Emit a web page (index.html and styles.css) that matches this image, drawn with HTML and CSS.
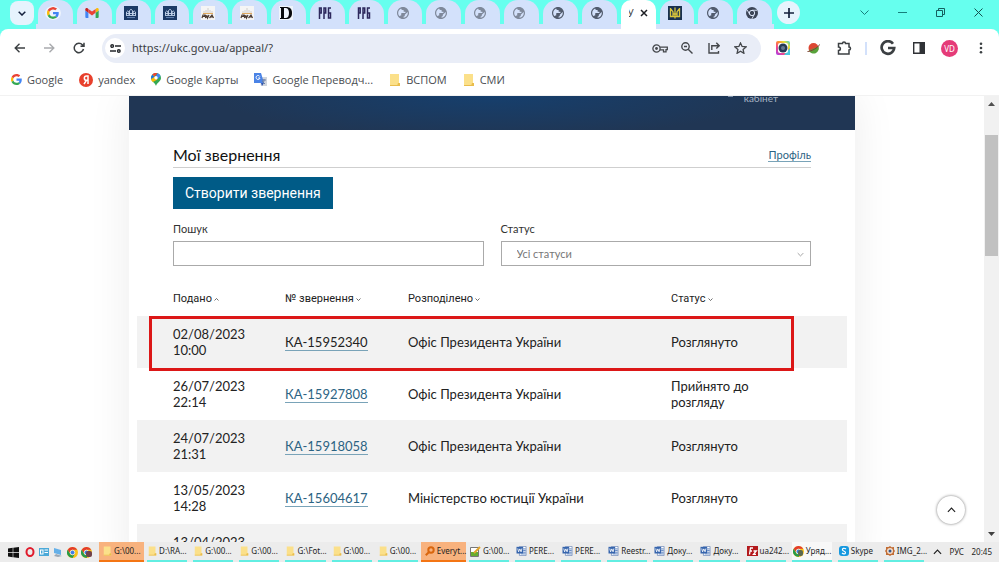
FILE: index.html
```html
<!DOCTYPE html>
<html lang="uk">
<head>
<meta charset="utf-8">
<title>Мої звернення</title>
<link rel="stylesheet" href="styles.css">
</head>
<body>
<svg class="defs" aria-hidden="true">
  <symbol id="google" viewBox="0 0 48 48"><path fill="#EA4335" d="M24 9.500c3.540 0 6.710 1.220 9.210 3.600l6.850-6.850C35.900 2.380 30.470 0 24 0 14.620 0 6.510 5.380 2.560 13.220l7.980 6.190C12.430 13.720 17.740 9.500 24 9.500z"/><path fill="#4285F4" d="M46.980 24.550c0-1.570-.15-3.090-.38-4.550H24v9.020h12.940c-.58 2.960-2.260 5.480-4.780 7.180l7.730 6c4.510-4.180 7.090-10.360 7.090-17.650z"/><path fill="#FBBC05" d="M10.530 28.590c-.48-1.450-.76-2.990-.76-4.590s.27-3.140.76-4.590l-7.980-6.190C.92 16.460 0 20.120 0 24c0 3.880.92 7.540 2.560 10.780l7.970-6.190z"/><path fill="#34A853" d="M24 48c6.480 0 11.930-2.130 15.890-5.810l-7.730-6c-2.150 1.450-4.920 2.300-8.160 2.300-6.260 0-11.570-4.220-13.470-9.910l-7.980 6.190C6.510 42.620 14.620 48 24 48z"/></symbol>
  <symbol id="gmail" viewBox="0 0 24 18"><path fill="#4285F4" d="M1.600 18H5.500V8.700L0 4.600v11.800C0 17.300.7 18 1.600 18z"/><path fill="#34A853" d="M18.500 18h3.900c.9 0 1.600-.7 1.600-1.600V4.600l-5.500 4.100z"/><path fill="#FBBC04" d="M18.500 1.700v7L24 4.600V2.400c0-2-2.300-3.200-3.900-2z"/><path fill="#EA4335" d="M5.500 8.700v-7L12 6.500l6.500-4.800v7L12 13.500z"/><path fill="#C5221F" d="M0 2.400v2.200l5.500 4.100v-7L3.900.4C2.300-.8 0 .4 0 2.400z"/></symbol>
  <symbol id="court" viewBox="0 0 14 14"><path fill="#1c3a66" d="M0 0h14v14H0z"/><path fill="none" stroke="#c4d5ec" stroke-width=".9" d="M2.500 9V6l1.200-1L5 6v3M5.500 9V4.500L7 3.300l1.500 1.200V9M9 9V6l1.300-1 1.200 1v3M2.500 7.500h9M2 9.500h10"/><path stroke="#5f7fae" d="M3 11.500h8"/></symbol>
  <symbol id="pwa" viewBox="0 0 14 14"><path fill="#f5f5f5" d="M0 0h14v14H0z"/><path stroke="#c9c5c0" stroke-width=".8" d="M3 7V5m2 2V4m2 3V2m2 5V4m2 3V5"/><path fill="#e0a95d" d="M2 7h10v1H2z"/><path fill="none" stroke="#4a3a30" stroke-width="1.200" d="M1 12l1-3h2l-.5 1.500H2M5 9l-.5 3 1.500-2 .5 2L8 9M8.500 12L11 9l1.500 3M9.500 11h3"/></symbol>
  <symbol id="dee" viewBox="0 0 14 14"><path fill="#eff4fb" d="M0 0h14v14H0z"/><path fill="#08090c" fill-rule="evenodd" d="M1 1h6c4 0 6 2 6 6s-2 6-6 6H1v-1h1V2H1zm4 1v10h1.500c2.500 0 3.500-2 3.500-5S9 2 6.500 2z"/></symbol>
  <symbol id="rrb" viewBox="0 0 13 12"><path fill="none" stroke="#2d285d" stroke-width="1.500" d="M1 12V1h1.700v5H1M5.500 12V1h1.700v5H5.500M12.500 1H10v10h2V6h-2"/></symbol>
  <symbol id="globe" viewBox="2 2 20 20"><path fill="currentColor" d="M12 2C6.480 2 2 6.480 2 12s4.480 10 10 10 10-4.480 10-10S17.520 2 12 2zm-1 17.930c-3.950-.49-7-3.850-7-7.930 0-.62.080-1.210.21-1.790L9 15v1c0 1.100.9 2 2 2v1.930zm6.900-2.540c-.26-.81-1-1.390-1.900-1.390h-1v-3c0-.55-.45-1-1-1H8v-2h2c.55 0 1-.45 1-1V7h2c1.100 0 2-.9 2-2v-.41c2.930 1.190 5 4.060 5 7.410 0 2.080-.8 3.970-2.100 5.390z" transform="matrix(-1 0 0 1 24 0)"/></symbol>
  <symbol id="trident" viewBox="0 0 14 14"><path fill="#193150" d="M0 0h14v14H0z"/><path fill="none" stroke="#d9c53c" stroke-width="1.300" d="M2.500 2v8.500h9V2M5 10V6L3 3m6 7V6l2-3M7 1.500v11M5 8h4"/></symbol>
  <symbol id="chromemono" viewBox="0 0 24 24"><circle cx="12" cy="12" r="12" fill="#3c4557"/><circle cx="12" cy="12" r="5.300" fill="#3c4557" stroke="#dce7fa" stroke-width="2"/><path stroke="#dce7fa" stroke-width="1.800" d="M12 6.500h10M7.500 15L2.500 6M16.500 15l-5 9"/></symbol>
  <symbol id="chrome" viewBox="0 0 24 24"><circle cx="12" cy="12" r="12" fill="#fbc116"/><path fill="#e33b2e" d="M1.600 6A12 12 0 0 1 22.400 6H12a6 6 0 0 0-5.200 9z"/><path fill="#269b4b" d="M1.600 6A12 12 0 0 0 12 24l5.200-9a6 6 0 0 1-10.400 0z"/><circle cx="12" cy="12" r="5" fill="#3d7de8" stroke="#fff" stroke-width="1.500"/></symbol>
  <symbol id="folder" viewBox="0 0 12 12"><path fill="#fbe08a" d="M1 0h9v9h1v3H1z"/><path fill="#e9bd4d" d="M9 9h2v3H8zM1 11h8v1H1z"/></symbol>
  <symbol id="word" viewBox="0 0 12 12"><path fill="#fff" stroke="#7892bd" d="M3.500.5h8v11h-8z"/><path stroke="#3e6db5" d="M8 3.500h3M8 5.500h3M8 7.500h3M5 9.500h6"/><path fill="#3665ad" d="M0 1h8v8H0z"/><path fill="none" stroke="#fff" d="M1.500 3l1 4L4 3.500 5.500 7l1-4"/></symbol>
  <symbol id="chev" viewBox="0 0 10 6"><path fill="none" stroke="currentColor" stroke-width="1.300" d="M1 1l4 4 4-4"/></symbol>
</svg>

<header class="browser">
  <div class="tabstrip">
    <button class="tabsearch" aria-label="Пошук вкладок"><svg width="8" height="5" viewBox="0 0 8 5"><path d="M.7.7L4 4 7.300.7" fill="none" stroke="#14213d" stroke-width="1.500"/></svg></button>
    <nav class="tabs" aria-label="Вкладки">
      <a class="tab" href="#"><svg class="disc" width="12" height="12"><use href="#google"/></svg></a>
      <a class="tab" href="#"><svg width="13" height="10"><use href="#gmail"/></svg></a>
      <a class="tab" href="#"><svg width="14" height="14"><use href="#court"/></svg></a>
      <a class="tab" href="#"><svg width="14" height="14"><use href="#court"/></svg></a>
      <a class="tab" href="#"><svg width="14" height="14"><use href="#pwa"/></svg></a>
      <a class="tab" href="#"><svg width="14" height="14"><use href="#pwa"/></svg></a>
      <a class="tab" href="#"><svg width="14" height="14"><use href="#dee"/></svg></a>
      <a class="tab" href="#"><svg width="13" height="12"><use href="#rrb"/></svg></a>
      <a class="tab" href="#"><svg width="13" height="12"><use href="#rrb"/></svg></a>
      <a class="tab faded" href="#"><svg width="12" height="12"><use href="#globe"/></svg></a>
      <a class="tab faded" href="#"><svg width="12" height="12"><use href="#globe"/></svg></a>
      <a class="tab faded" href="#"><svg width="12" height="12"><use href="#globe"/></svg></a>
      <a class="tab faded" href="#"><svg width="12" height="12"><use href="#globe"/></svg></a>
      <a class="tab" href="#"><svg width="12" height="12"><use href="#globe"/></svg></a>
      <a class="tab" href="#"><svg width="12" height="12"><use href="#globe"/></svg></a>
      <a class="tab active" href="#"><span>У</span><svg width="8" height="8" viewBox="0 0 8 8"><path d="M1 1l6 6M7 1L1 7" stroke="#1d1f24" stroke-width="1.500"/></svg></a>
      <a class="tab" href="#"><svg width="14" height="14"><use href="#trident"/></svg></a>
      <a class="tab" href="#"><svg width="12" height="12"><use href="#globe"/></svg></a>
      <a class="tab" href="#"><svg width="12" height="12"><use href="#chromemono"/></svg></a>
    </nav>
    <button class="newtab" aria-label="Нова вкладка"><svg width="10" height="10" viewBox="0 0 10 10"><path d="M5 0v10M0 5h10" stroke="#14213d" stroke-width="1.700"/></svg></button>
    <div class="winctl">
      <button aria-label="Вкладки"><svg width="9" height="5" viewBox="0 0 9 5"><path d="M.5.5l4 4 4-4" fill="none" stroke="#167f7b"/></svg></button>
      <button aria-label="Згорнути"><svg width="9" height="9" viewBox="0 0 9 9"><path d="M0 4.500h9" stroke="#167f7b"/></svg></button>
      <button aria-label="Відновити"><svg width="9" height="9" viewBox="0 0 9 9"><path d="M.5 2.500h6v6h-6zM2.500 2V.5h6v6H7" fill="none" stroke="#14605f"/></svg></button>
      <button aria-label="Закрити"><svg width="9" height="9" viewBox="0 0 9 9"><path d="M.5.5l8 8M8.500.5l-8 8" stroke="#14504f"/></svg></button>
    </div>
  </div>

  <div class="toolbar">
    <div class="navbtns">
      <button aria-label="Назад"><svg width="11" height="10" viewBox="0 0 11 10"><path d="M11 5H1.500M5.500.7L1.200 5l4.300 4.300" fill="none" stroke="#3c4043" stroke-width="1.400"/></svg></button>
      <button aria-label="Вперед"><svg width="11" height="10" viewBox="0 0 11 10"><path d="M0 5h9.500M5.500.7L9.800 5 5.500 9.300" fill="none" stroke="#a9abae" stroke-width="1.400"/></svg></button>
      <button aria-label="Оновити"><svg width="12" height="12" viewBox="0 0 12 12"><path d="M10.500 7A4.700 4.700 0 1 1 9.500 2.900L10.800 4M11 .8V4.300H7.500" fill="none" stroke="#3c4043" stroke-width="1.500"/></svg></button>
    </div>
    <div class="omnibox">
      <button class="siteinfo" aria-label="Відомості про сайт"><svg width="11" height="9" viewBox="0 0 11 9"><g fill="none" stroke="#24272b" stroke-width="1.400"><circle cx="2.200" cy="2" r="1.300"/><circle cx="8.800" cy="7" r="1.300"/><path d="M5 2h6M0 7h6"/></g></svg></button>
      <input class="url" aria-label="Адреса" value="https://ukc.gov.ua/appeal/?">
      <div class="omniacts">
        <button aria-label="Паролі"><svg width="16" height="9" viewBox="0 0 16 9"><g fill="none" stroke="#44474b" stroke-width="1.300"><circle cx="4.500" cy="4.500" r="3.600"/><path d="M8 3.200h7.300v2.500H14v2.200h-2.500V5.800H8"/></g><circle cx="4.500" cy="4.500" r="1.400" fill="#44474b"/></svg></button>
        <button aria-label="Масштаб"><svg width="12" height="12" viewBox="0 0 12 12"><g fill="none" stroke="#44474b" stroke-width="1.400"><circle cx="4.500" cy="4.500" r="3.700"/><path d="M7.200 7.200l4.300 4.300M3 4.500h3"/></g></svg></button>
        <button aria-label="Поділитися"><svg width="12" height="12" viewBox="0 0 12 12"><path d="M1 1v10h9.500V9M3.800 8V3.700h7M8.300.8l2.900 2.900-2.900 2.900" fill="none" stroke="#44474b" stroke-width="1.400"/></svg></button>
        <button aria-label="Закладка"><svg width="13" height="12" viewBox="0 0 13 12"><path d="M6.500 1l1.600 3.500 3.900.4L9.100 7.500l.8 3.800-3.400-2-3.400 2 .8-3.800L1 4.900l3.900-.4z" fill="none" stroke="#44474b" stroke-width="1.300"/></svg></button>
      </div>
    </div>
    <div class="exts">
      <button aria-label="Камера"><svg width="14" height="14" viewBox="0 0 14 14"><defs><linearGradient id="rb" x1="0" y1="1" x2="1" y2="0"><stop offset="0" stop-color="#a13df0"/><stop offset=".3" stop-color="#f0468f"/><stop offset=".55" stop-color="#ff8d32"/><stop offset=".75" stop-color="#e8e13a"/><stop offset="1" stop-color="#38c8d8"/></linearGradient></defs><rect width="14" height="14" rx="2" fill="url(#rb)"/><path d="M8 14h6V7z" fill="#47cbe0"/><rect x="2" y="2" width="10" height="10" rx="2" fill="#fff"/><circle cx="7" cy="7" r="4.500" fill="#263a55"/><circle cx="7" cy="7" r="2" fill="#66788f"/></svg></button>
      <button aria-label="Планета"><svg width="13" height="12" viewBox="0 0 13 12"><circle cx="6.500" cy="6" r="5" fill="#dc4733"/><path d="M2 8.500L11.300 4.500A5 5 0 0 1 2 8.500z" fill="#58a33b"/><path d="M.5 9.500C4 9.500 11 6 12.500 2.500" fill="none" stroke="#7c4231"/></svg></button>
      <button aria-label="Розширення"><svg width="15" height="14" viewBox="0 0 15 14"><path d="M1.500 2.500h4c0-2 3-2 3 0h3.500v3.500c2 0 2 3 0 3v4H1.500V9.500c2.500 0 2.500-3.500 0-3.500z" fill="none" stroke="#3c4043" stroke-width="1.500"/></svg></button>
      <i class="sep"></i>
      <button aria-label="Google"><svg width="16" height="16" viewBox="0 0 16 16"><path d="M13 3.700A6.300 6.300 0 1 0 14.200 8H8" fill="none" stroke="#3c4043" stroke-width="2.700"/></svg></button>
      <button aria-label="Бічна панель"><svg width="12" height="12" viewBox="0 0 12 12"><path d="M.7.7h10.600v10.600H.7z" fill="none" stroke="#303236" stroke-width="1.400"/><path d="M6.500 0H12v12H6.500z" fill="#303236"/></svg></button>
      <button class="avatar" aria-label="Профіль VD">VD</button>
      <button aria-label="Меню"><svg width="4" height="12" viewBox="0 0 4 12" fill="#3c4043"><circle cx="2" cy="1.700" r="1.300"/><circle cx="2" cy="6" r="1.300"/><circle cx="2" cy="10.300" r="1.300"/></svg></button>
    </div>
  </div>

  <nav class="bookmarks" aria-label="Закладки">
    <a href="#"><svg width="11" height="11"><use href="#google"/></svg>Google</a>
    <a href="#"><svg width="14" height="14" viewBox="0 0 14 14"><circle cx="7" cy="7" r="7" fill="#e8402c"/><path d="M9 11V3H7.500C4.600 3 4.600 7.300 7.500 7.300H9M7.500 7.300L5 11" fill="none" stroke="#fff" stroke-width="1.500"/></svg>yandex</a>
    <a href="#"><svg width="10" height="13" viewBox="0 0 10 13"><path d="M5 13C4.500 10 0 8.500 0 5a5 5 0 0 1 10 0c0 3.500-4.500 5-5 8z" fill="#34a853"/><path d="M1.200 1.700A5 5 0 0 1 6.500.2L3.300 4z" fill="#ea4335"/><path d="M6.500.2A5 5 0 0 1 9.500 3L6.500 6.500 5 3z" fill="#4285f4"/><path d="M3.300 3.800L6.500 6.500 1.800 9A5 5 0 0 1 0 5l3-3z" fill="#fbbc04"/><path d="M1.200 1.700L3.500 3.700.2 6A5 5 0 0 1 1.200 1.700z" fill="#1a73e8"/><circle cx="5" cy="4.800" r="1.700" fill="#fff"/></svg>Google Карты</a>
    <a href="#"><svg width="13" height="13" viewBox="0 0 13 13"><path d="M5 4h8v9H7z" fill="#d0d5dd"/><path d="M0 0h7l3 10H0z" fill="#4a83e6"/><path d="M5.800 3.500A2 2 0 1 0 6 5H4.200" fill="none" stroke="#fff"/><path d="M8 7h4M10 6v1c0 2-1 3-2 4m0-3c1 1 2 2 3 3" fill="none" stroke="#687da6"/><path d="M7 10h3l-2 3z" fill="#3056ae"/></svg>Google Переводч...</a>
    <a href="#"><svg width="12" height="12"><use href="#folder"/></svg>ВСПОМ</a>
    <a href="#"><svg width="12" height="12"><use href="#folder"/></svg>СМИ</a>
  </nav>
</header>

<div class="viewport">
  <main class="page">
    <div class="card">
      <div class="banner"><i></i><span>кабінет</span></div>
      <div class="content">
        <div class="heading">
          <h1>Мої звернення</h1>
          <a class="link" href="#">Профіль</a>
        </div>
        <button class="create">Створити звернення</button>
        <form class="filters">
          <div class="field">
            <label for="search">Пошук</label>
            <input id="search" type="text">
          </div>
          <div class="field">
            <label for="status">Статус</label>
            <div class="selectbox">
              <select id="status"><option>Усі статуси</option></select>
              <svg width="7" height="5"><use href="#chev"/></svg>
            </div>
          </div>
        </form>
      </div>
      <div class="tablewrap">
        <table>
          <thead>
            <tr>
              <th class="c1">Подано<svg class="up" width="5" height="3"><use href="#chev"/></svg></th>
              <th class="c2">№ звернення<svg width="5" height="3"><use href="#chev"/></svg></th>
              <th class="c3">Розподілено<svg width="5" height="3"><use href="#chev"/></svg></th>
              <th class="c4">Статус<svg width="5" height="3"><use href="#chev"/></svg></th>
            </tr>
          </thead>
          <tbody>
            <tr class="marked"><td>02/08/2023<br>10:00<i class="frame"></i></td><td><a class="link visited" href="#">КА-15952340</a></td><td>Офіс Президента України</td><td>Розглянуто</td></tr>
            <tr><td>26/07/2023<br>22:14</td><td><a class="link" href="#">КА-15927808</a></td><td>Офіс Президента України</td><td>Прийнято до<br>розгляду</td></tr>
            <tr><td>24/07/2023<br>21:31</td><td><a class="link" href="#">КА-15918058</a></td><td>Офіс Президента України</td><td>Розглянуто</td></tr>
            <tr><td>13/05/2023<br>14:28</td><td><a class="link" href="#">КА-15604617</a></td><td>Міністерство юстиції України</td><td>Розглянуто</td></tr>
            <tr><td>13/04/2023<br>&nbsp;</td><td></td><td></td><td></td></tr>
          </tbody>
        </table>
      </div>
    </div>
  </main>
  <div class="scrollbar">
    <svg width="7" height="4" viewBox="0 0 7 4"><path d="M0 4l3.500-4L7 4z" fill="#505050"/></svg>
    <div class="track"><div class="thumb"></div></div>
    <svg width="7" height="4" viewBox="0 0 7 4"><path d="M0 0l3.500 4L7 0z" fill="#404040"/></svg>
  </div>
  <button class="totop" aria-label="Нагору"><svg class="up" width="9" height="6"><use href="#chev"/></svg></button>
</div>

<footer class="taskbar">
  <div class="quick">
    <button aria-label="Пуск"><svg width="11" height="11" viewBox="0 0 11 11"><path fill="#111" d="M0 1.500l4.700-.7v4.500H0zM5.300.7L11 0v5.300H5.300zM0 5.900h4.700v4.400L0 9.600zM5.300 5.900H11V11l-5.700-.7z"/></svg></button>
    <button aria-label="Opera"><svg width="10" height="10" viewBox="0 0 10 10"><ellipse cx="5" cy="5" rx="3.500" ry="4" fill="none" stroke="#e01b2c" stroke-width="2"/></svg></button>
    <button aria-label="Панель"><svg width="10" height="8" viewBox="0 0 10 8"><path fill="#4ba9d8" d="M0 0h10v8H0z"/><path fill="#fff" d="M1 1.500h3.500v5H1zM5.500 1.500H9v1H5.500zM5.500 4H9v1H5.500z"/><path fill="#4ba9d8" d="M2 2.500h1.500v3H2z"/></svg></button>
    <button aria-label="Робочий стіл"><svg width="10" height="9" viewBox="0 0 10 9"><path fill="#65b0e8" d="M1 0l7 2v5L1 5z"/><path fill="#9aa7b4" d="M3 6l6 2-4 1-4-1z"/></svg></button>
    <button aria-label="Chrome"><svg width="11" height="11"><use href="#chrome"/></svg></button>
    <button aria-label="Chrome"><svg width="11" height="11"><use href="#chrome"/><rect x="5" y="4" width="6" height="6" rx="2" fill="#71424a"/></svg></button>
  </div>
  <div class="apps">
    <button class="hot"><svg width="9" height="10"><use href="#folder"/></svg>G:\00...</button>
    <button><svg width="9" height="10"><use href="#folder"/></svg>D:\RA...</button>
    <button><svg width="9" height="10"><use href="#folder"/></svg>G:\00...</button>
    <button><svg width="9" height="10"><use href="#folder"/></svg>G:\00...</button>
    <button><svg width="9" height="10"><use href="#folder"/></svg>G:\Fot...</button>
    <button><svg width="9" height="10"><use href="#folder"/></svg>G:\00...</button>
    <button><svg width="9" height="10"><use href="#folder"/></svg>G:\00...</button>
    <button class="hot"><svg width="10" height="10" viewBox="0 0 10 10"><g fill="none" stroke="#d9660e" stroke-width="2"><circle cx="6" cy="4" r="2.700"/><path d="M4 6L.8 9.200"/></g></svg>Everyt...</button>
    <button><svg width="11" height="11" viewBox="0 0 11 11"><path fill="#fff" stroke="#777" d="M.5 1.500h8v9h-8z"/><path fill="#67ad2f" d="M1 6h7v4H1z"/><path d="M4 7l6-6" stroke="#e2a52b" stroke-width="2"/></svg>G:\00...</button>
    <button><svg width="11" height="10"><use href="#word"/></svg>PERE...</button>
    <button><svg width="11" height="10"><use href="#word"/></svg>PERE...</button>
    <button><svg width="11" height="10"><use href="#word"/></svg>Reestr...</button>
    <button><svg width="11" height="10"><use href="#word"/></svg>Доку...</button>
    <button><svg width="11" height="10"><use href="#word"/></svg>Доку...</button>
    <button><svg width="11" height="10" viewBox="0 0 11 10"><path fill="#b3191c" d="M0 0h11v10H0z"/><path d="M2.500 8.500l1-6.500H6M3 5h2M6.500 5h2.800L6.500 8.300H9" fill="none" stroke="#fff" stroke-width="1.300"/></svg>ua242...</button>
    <button class="current"><svg width="11" height="11"><use href="#chrome"/><rect x="5" y="4" width="5" height="6" rx="2" fill="#5b6950"/></svg>Уряд...</button>
    <button><svg width="10" height="10" viewBox="0 0 10 10"><rect width="10" height="10" rx="3" fill="#1598df"/><path d="M7 3C5 1.500 3 2.500 3.500 4S7 5 6.500 6.800 4 8 3 7" fill="none" stroke="#fff" stroke-width="1.200"/></svg>Skype</button>
    <button><svg width="10" height="10" viewBox="0 0 10 10"><path fill="#c16d35" d="M5 0l1.500 1.200L9 1v2.500L10 5 9 6.500V9H6.500L5 10 3.500 9H1V6.500L0 5l1-1.500V1h2.500z"/><circle cx="5" cy="5" r="3" fill="#f3ddcd"/><circle cx="5" cy="5" r="1.500" fill="#33598c"/></svg>IMG_2...</button>
  </div>
  <div class="tray">
    <button aria-label="Приховані значки"><svg class="up" width="9" height="6"><use href="#chev"/></svg></button>
    <span>РУС</span>
    <time>20:45</time>
  </div>
</footer>
</body>
</html>
```
FILE: styles.css
```css
* { box-sizing: border-box; }

body {
  margin: 0;
  height: 100vh;
  display: flex;
  flex-direction: column;
  overflow: hidden;
  background: #fff;
  font-family: "Noto Sans", sans-serif;
  color: #1f1f1f;
}

button {
  display: flex;
  align-items: center;
  justify-content: center;
  padding: 0;
  border: 0;
  background: none;
  font: inherit;
  color: inherit;
}

a { color: inherit; text-decoration: none; }
svg { flex: none; }
.defs { position: absolute; width: 0; height: 0; }
.up { transform: scaleY(-1); }

/* browser frame */
.browser { flex: none; background: #66ffee; }

.tabstrip { display: flex; height: 29px; overflow: hidden; }

.tabsearch {
  width: 24px;
  height: 24px;
  margin: 1px 2px 0 10px;
  border-radius: 8px;
  background: #e6f3fd;
}

.tabs {
  flex: 1;
  display: flex;
  background: linear-gradient(transparent 24px, #d3e1fb 24px);
}

.tab {
  flex: 1;
  display: flex;
  align-items: center;
  padding: 0 8px 4px;
  margin: 0 2px;
  border-radius: 14px 14px 4px 4px;
  background: #d3e1fb;
  color: #525c6e;
}

.tab svg { margin: 0 auto 0 0; }
.tab:not(.active) svg { width: 14px; }
.tab .disc { border-radius: 50%; box-shadow: 0 0 0 1px #eef4fd; background: #eef4fd; }
.tab.faded { color: #7f899b; }

.tab.active {
  background: #fff;
  justify-content: space-between;
  border-radius: 10px 10px 0 0;
  box-shadow: 0 27px 0 3px #fff;
  color: #444;
  font-size: 10px;
}

.tab.active span { width: 5px; overflow: hidden; direction: rtl; }
.tab.active svg { margin: 0; }

.newtab {
  width: 23px;
  height: 23px;
  margin: 1px 0 0 3px;
  border-radius: 50%;
  background: #e6f3fd;
}

.winctl { display: flex; margin: 0 2px 0 45px; }
.winctl button { width: 38px; height: 25px; }

.toolbar {
  display: flex;
  align-items: center;
  height: 38px;
  border-radius: 8px 8px 0 0;
  background: #fff;
}

.navbtns { display: flex; width: 102px; padding-left: 4px; }
.navbtns button { width: 30px; height: 28px; }

.omnibox {
  flex: 1;
  display: flex;
  align-items: center;
  height: 29px;
  padding: 0 7px 0 3px;
  border-radius: 15px;
  background: #e9edf7;
}

.siteinfo {
  width: 20px;
  height: 20px;
  border-radius: 50%;
  background: #fff;
}

.url {
  flex: 1;
  min-width: 0;
  margin-left: 7px;
  padding: 0;
  border: 0;
  background: none;
  font: 11px/18px "Noto Sans", sans-serif;
  color: #3c4043;
}

.omniacts { display: flex; }
.omniacts button { width: 27px; height: 24px; }

.exts { display: flex; align-items: center; width: 238px; padding-left: 6px; }
.exts button { width: 31px; height: 24px; }
.exts .sep { width: 2px; height: 13px; margin: 0 5px; background: #d3e1fb; }

.exts .avatar {
  width: 17px;
  height: 17px;
  margin: 0 7px;
  border-radius: 50%;
  background: #e53b78;
  color: #fff;
  font-size: 8px;
}

.bookmarks {
  display: flex;
  align-items: center;
  gap: 16px;
  height: 29px;
  padding: 0 11px 3px;
  border-bottom: 1px solid #f2f2f2;
  background: #fff;
  font: 11px/16px "Open Sans", "Noto Sans", sans-serif;
  color: #4a4d51;
}

.bookmarks a { display: flex; align-items: center; gap: 5px; }

/* web page */
.viewport {
  position: relative;
  flex: 1;
  min-height: 0;
  display: flex;
  overflow: hidden;
}

.page { flex: 1; min-width: 0; }

.card {
  max-width: 726px;
  min-height: 100%;
  margin: 0 auto;
  background: #fff;
  box-shadow: 0 0 40px rgba(0, 0, 0, .08);
  font-family: Lato, "Noto Sans", sans-serif;
}

.banner {
  display: flex;
  justify-content: flex-end;
  height: 34px;
  padding-right: 77px;
  overflow: hidden;
  background: radial-gradient(ellipse 38% 120% at 50% 0, #163f6d, #203654);
  color: #a9b6c6;
  font-size: 10px;
  line-height: 12px;
}

.banner span { margin-top: -4px; }
.banner i { width: 5px; height: 1px; margin-right: 11px; background: #7d90a8; }

.content { padding: 16px 44px 0; }

.heading {
  display: flex;
  align-items: center;
  justify-content: space-between;
  height: 22px;
  padding-bottom: 4px;
  border-bottom: 1px solid #cfcfcf;
}

h1 { margin: 0; font-size: 16px; line-height: 18px; font-weight: 400; color: #111; }
.heading .link { font-size: 11px; line-height: 13px; }

.link { display: inline-block; color: #2c6383; border-bottom: 1px solid #79a3b8; }
.link.visited { color: #222; }

.create {
  height: 32px;
  margin-top: 9px;
  padding: 0 12px;
  background: #005b87;
  color: #fff;
  font: 14px/18px Roboto, sans-serif;
}

.filters {
  display: grid;
  grid-template-columns: 1fr 1fr;
  gap: 17px;
  margin-top: 13px;
}

.field label { display: block; font-size: 11px; line-height: 14px; margin-bottom: 5px; color: #333; }

.field input,
.field select {
  display: block;
  width: 100%;
  height: 25px;
  padding: 0 15px;
  border: 1px solid #aaa;
  border-radius: 0;
  background: #fff;
  font: 11px/16px Lato, "Noto Sans", sans-serif;
  color: #777;
  appearance: none;
}

.selectbox { position: relative; color: #999; }
.selectbox svg { position: absolute; right: 7px; top: 11px; }

.tablewrap { padding: 16px 8px 0; }

table { width: 100%; border-collapse: collapse; table-layout: fixed; }

th {
  height: 34px;
  padding: 0;
  text-align: left;
  font: 11px/14px Roboto, sans-serif;
  color: #222;
}

th svg { margin-left: 2px; vertical-align: 1px; }
.c1 { width: 148px; }
.c2 { width: 123px; }
.c3 { width: 263px; }

td {
  height: 52px;
  padding: 0;
  font-size: 13px;
  line-height: 16px;
  color: #222;
}

th:first-child, td:first-child { padding-left: 36px; }
tbody tr:nth-child(odd) { background: #f2f2f2; }

.marked { position: relative; }

.frame {
  position: absolute;
  inset: 0 53px -3px 12px;
  border: 3px solid #dc1717;
}

.totop {
  position: absolute;
  right: 34px;
  bottom: 18px;
  width: 28px;
  height: 28px;
  border-radius: 50%;
  background: #fff;
  box-shadow: 0 0 3px rgba(0, 0, 0, .55);
}

.scrollbar {
  position: relative;
  width: 15px;
  display: flex;
  flex-direction: column;
  align-items: center;
  padding: 6px 0;
  background: #f1f1f1;
}

.track { flex: 1; width: 13px; padding: 29px 0; }
.thumb { height: 33%; background: #c1c1c1; }

/* taskbar */
.taskbar {
  flex: none;
  display: flex;
  height: 20px;
  background: #ececec;
  font-size: 8px;
  line-height: 12px;
}

.quick { display: flex; width: 99px; padding-left: 4px; }
.quick button { width: 14px; }
.quick button:first-child { width: 18px; margin-right: 1px; }

.apps { flex: 1; display: flex; min-width: 0; }

.apps button {
  flex: 1;
  min-width: 0;
  gap: 2px;
  justify-content: flex-start;
  margin: 0 3px;
  padding-left: 1px;
  border-bottom: 2px solid #62eee2;
  white-space: nowrap;
}

.apps .hot {
  flex-grow: 1;
  flex-basis: 6px;
  margin: 0;
  padding-left: 4px;
  background: #f8b27e;
  border-bottom-color: #f47514;
}

.apps .current { background: #f8f8f8; }

.tray { display: flex; align-items: center; width: 72px; padding: 0 7px 0 6px; justify-content: space-between; }
```
